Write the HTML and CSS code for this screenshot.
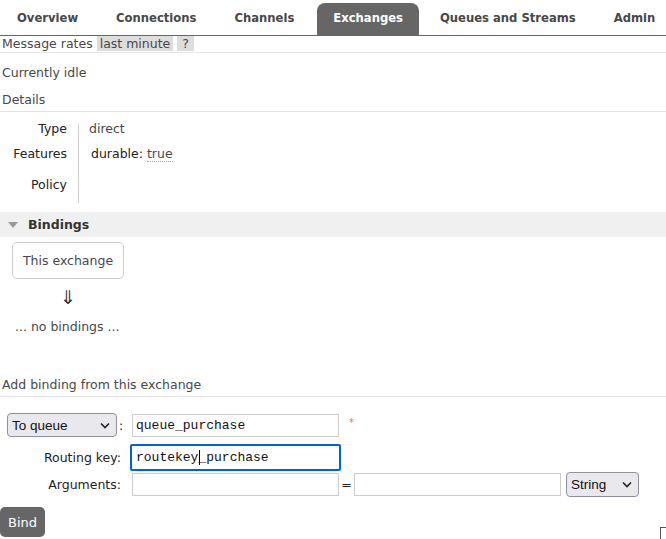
FILE: index.html
```html
<!DOCTYPE html>
<html>
<head>
<meta charset="utf-8">
<link rel="stylesheet" href="styles.css">
</head>
<body>
<nav class="tabs">
  <a class="tab">Overview</a>
  <a class="tab">Connections</a>
  <a class="tab">Channels</a>
  <a class="tab active">Exchanges</a>
  <a class="tab">Queues and Streams</a>
  <a class="tab">Admin</a>
</nav>
<div class="rates">
  <span>Message rates</span>
  <span class="pill">last minute</span>
  <span class="pill">?</span>
</div>
<div class="sep"></div>
<p class="idle">Currently idle</p>
<h2 class="section-title">Details</h2>
<div class="details">
  <div class="labels">
    <div class="lbl l-type">Type</div>
    <div class="lbl l-feat">Features</div>
    <div class="lbl l-pol">Policy</div>
  </div>
  <div class="values">
    <div class="val v-type">direct</div>
    <div class="val v-feat"><span class="key">durable:</span> <span class="dotted">true</span></div>
  </div>
</div>
<div class="bindings-head"><span class="tri"></span>Bindings</div>
<div class="bindings">
  <div class="xbox">This exchange</div>
  <div class="arrow">⇓</div>
  <div class="nob">... no bindings ...</div>
</div>
<h2 class="section-title add">Add binding from this exchange</h2>
<div class="form">
  <div class="row r1">
    <div class="lab"><span class="sel sel-q">To queue<svg width="10" height="7" viewBox="0 0 10 7"><path d="M1 1.5 L5 5.5 L9 1.5" fill="none" stroke="#222" stroke-width="1.6"/></svg></span><span class="colon">:</span></div>
    <div class="inp">queue_purchase</div>
    <span class="req">*</span>
  </div>
  <div class="row r2">
    <div class="lab">Routing key:</div>
    <div class="inp focus">routekey<span class="caret"></span>_purchase</div>
  </div>
  <div class="row r3">
    <div class="lab">Arguments:</div>
    <div class="inp"></div>
    <span class="eq">=</span>
    <div class="inp"></div>
    <span class="sel sel-s">String<svg width="10" height="7" viewBox="0 0 10 7"><path d="M1 1.5 L5 5.5 L9 1.5" fill="none" stroke="#222" stroke-width="1.6"/></svg></span>
  </div>
  <button class="bind">Bind</button>
</div>
<div class="corner"></div>
</body>
</html>
```
FILE: styles.css
```css
* { box-sizing: border-box; }
html, body { margin: 0; padding: 0; }
body {
  font-family: "DejaVu Sans", Verdana, sans-serif;
  font-size: 12.5px;
  color: #484848;
  background: #fff;
  width: 666px;
  height: 539px;
  overflow: hidden;
  position: relative;
}
.tabs {
  display: flex;
  height: 36px;
  border-bottom: 1px solid #666;
  align-items: flex-end;
  gap: 4px;
}
.tab {
  display: block;
  font-weight: bold;
  font-size: 11.6px;
  color: #484848;
  padding: 0 17px;
  height: 32px;
  line-height: 31px;
  border-radius: 8px 8px 0 0;
  white-space: nowrap;
}
.tab.active { background: #666; color: #fff; padding: 0 16px; margin-left: 2px; }
.rates {
  display: flex;
  align-items: center;
  height: 15px;
  padding-left: 2px;
  gap: 4px;
  color: #484848;
}
.pill { background: #ddd; padding: 0 3px; height: 15px; line-height: 15px; }
.pill + .pill { padding: 0 5px; }
.sep { height: 1px; background: #e4e4e4; margin-top: 1px; }
.idle { margin: 12px 0 0 2px; line-height: 16px; }
.section-title {
  font-size: 12.5px;
  font-weight: normal;
  margin: 11px 0 0 0;
  padding: 0 0 3px 2px;
  line-height: 16px;
  border-bottom: 1px solid #e4e4e4;
}
.details { display: flex; margin-top: 12px; height: 79px; }
.labels {
  width: 79px;
  border-right: 1px solid #ccc;
  padding-right: 11px;
  text-align: right;
  color: #222;
}
.lbl { line-height: 16px; }
.l-type { margin-top: -3px; }
.l-feat { margin-top: 9px; }
.l-pol { margin-top: 15px; }
.values { padding-left: 10px; }
.val { line-height: 16px; }
.v-type { margin-top: -3px; }
.v-feat { margin-top: 9px; margin-left: 2px; }
.key { color: #222; }
.dotted { border-bottom: 1px dotted #aaa; }
.bindings-head {
  margin-top: 9px;
  height: 25px;
  background: #f0f0f0;
  display: flex;
  align-items: center;
  font-weight: bold;
  color: #333;
  padding-left: 8px;
}
.tri {
  width: 0; height: 0;
  border-left: 5px solid transparent;
  border-right: 5px solid transparent;
  border-top: 6px solid #999;
  margin-right: 10px;
}
.bindings { padding-left: 12px; }
.xbox {
  margin-top: 5px;
  width: 112px;
  height: 37px;
  border: 1px solid #ccc;
  border-radius: 5px;
  display: flex;
  align-items: center;
  justify-content: center;
  color: #484848;
}
.arrow { margin-left: 48px; font-size: 19px; height: 24px; line-height: 24px; margin-top: 6px; color: #333; }
.nob { margin-top: 10px; margin-left: 3px; line-height: 16px; }
.section-title.add { margin-top: 42px; }
.form { margin-top: 16px; }
.row { display: flex; align-items: center; }
.lab {
  width: 122px;
  text-align: right;
  color: #222;
  display: flex;
  justify-content: flex-end;
  align-items: center;
}
.sel {
  display: inline-flex;
  align-items: center;
  justify-content: space-between;
  font-family: "Liberation Sans", Arial, sans-serif;
  font-size: 13.5px;
  color: #111;
  background: #e9e9ed;
  border: 1px solid #8f8f9d;
  border-radius: 4px;
  padding: 0 6px 0 4px;
}
.sel-q { width: 110px; height: 24px; margin-left: 7px; }
.colon { margin-left: 2px; width: 6px; text-align: left; color: #222; }
.r1 .lab { justify-content: flex-start; width: 132px; }
.inp {
  height: 23px;
  width: 207px;
  border: 1px solid #ccc;
  font-family: "Liberation Mono", "Courier New", monospace;
  font-size: 13px;
  color: #111;
  padding-left: 3px;
  line-height: 21px;
  white-space: nowrap;
}
.r1 .inp { margin-top: 1px; }
.req { color: #f66; font-size: 10px; margin-left: 10px; align-self: flex-start; margin-top: 4px; }
.r2 { margin-top: 7px; }
.r2 .lab { width: 130px; padding-right: 9px; }
.inp.focus { width: 211px; height: 27px; border: 2px solid #0060df; border-radius: 2px; padding-left: 4px; line-height: 23px; }
.caret { display: inline-block; width: 1px; height: 15px; background: #000; vertical-align: -4px; margin-left: 1px; margin-right: -2px; }
.r3 { margin-top: 1px; }
.r3 .lab { width: 132px; padding-right: 11px; }
.eq { width: 15px; text-align: center; color: #222; }
.sel-s { width: 73px; height: 25px; margin-left: 5px; padding-left: 4px; }
.bind {
  margin-top: 10px;
  background: #666;
  color: #fff;
  border: none;
  border-radius: 5px;
  width: 45px;
  height: 30px;
  font-family: "DejaVu Sans", sans-serif;
  font-size: 13px;
  padding: 0;
  display: block;
}
.corner {
  position: absolute;
  left: 660px;
  top: 527px;
  width: 10px;
  height: 20px;
  border-left: 1px solid #555;
  border-top: 1px solid #555;
}
```
